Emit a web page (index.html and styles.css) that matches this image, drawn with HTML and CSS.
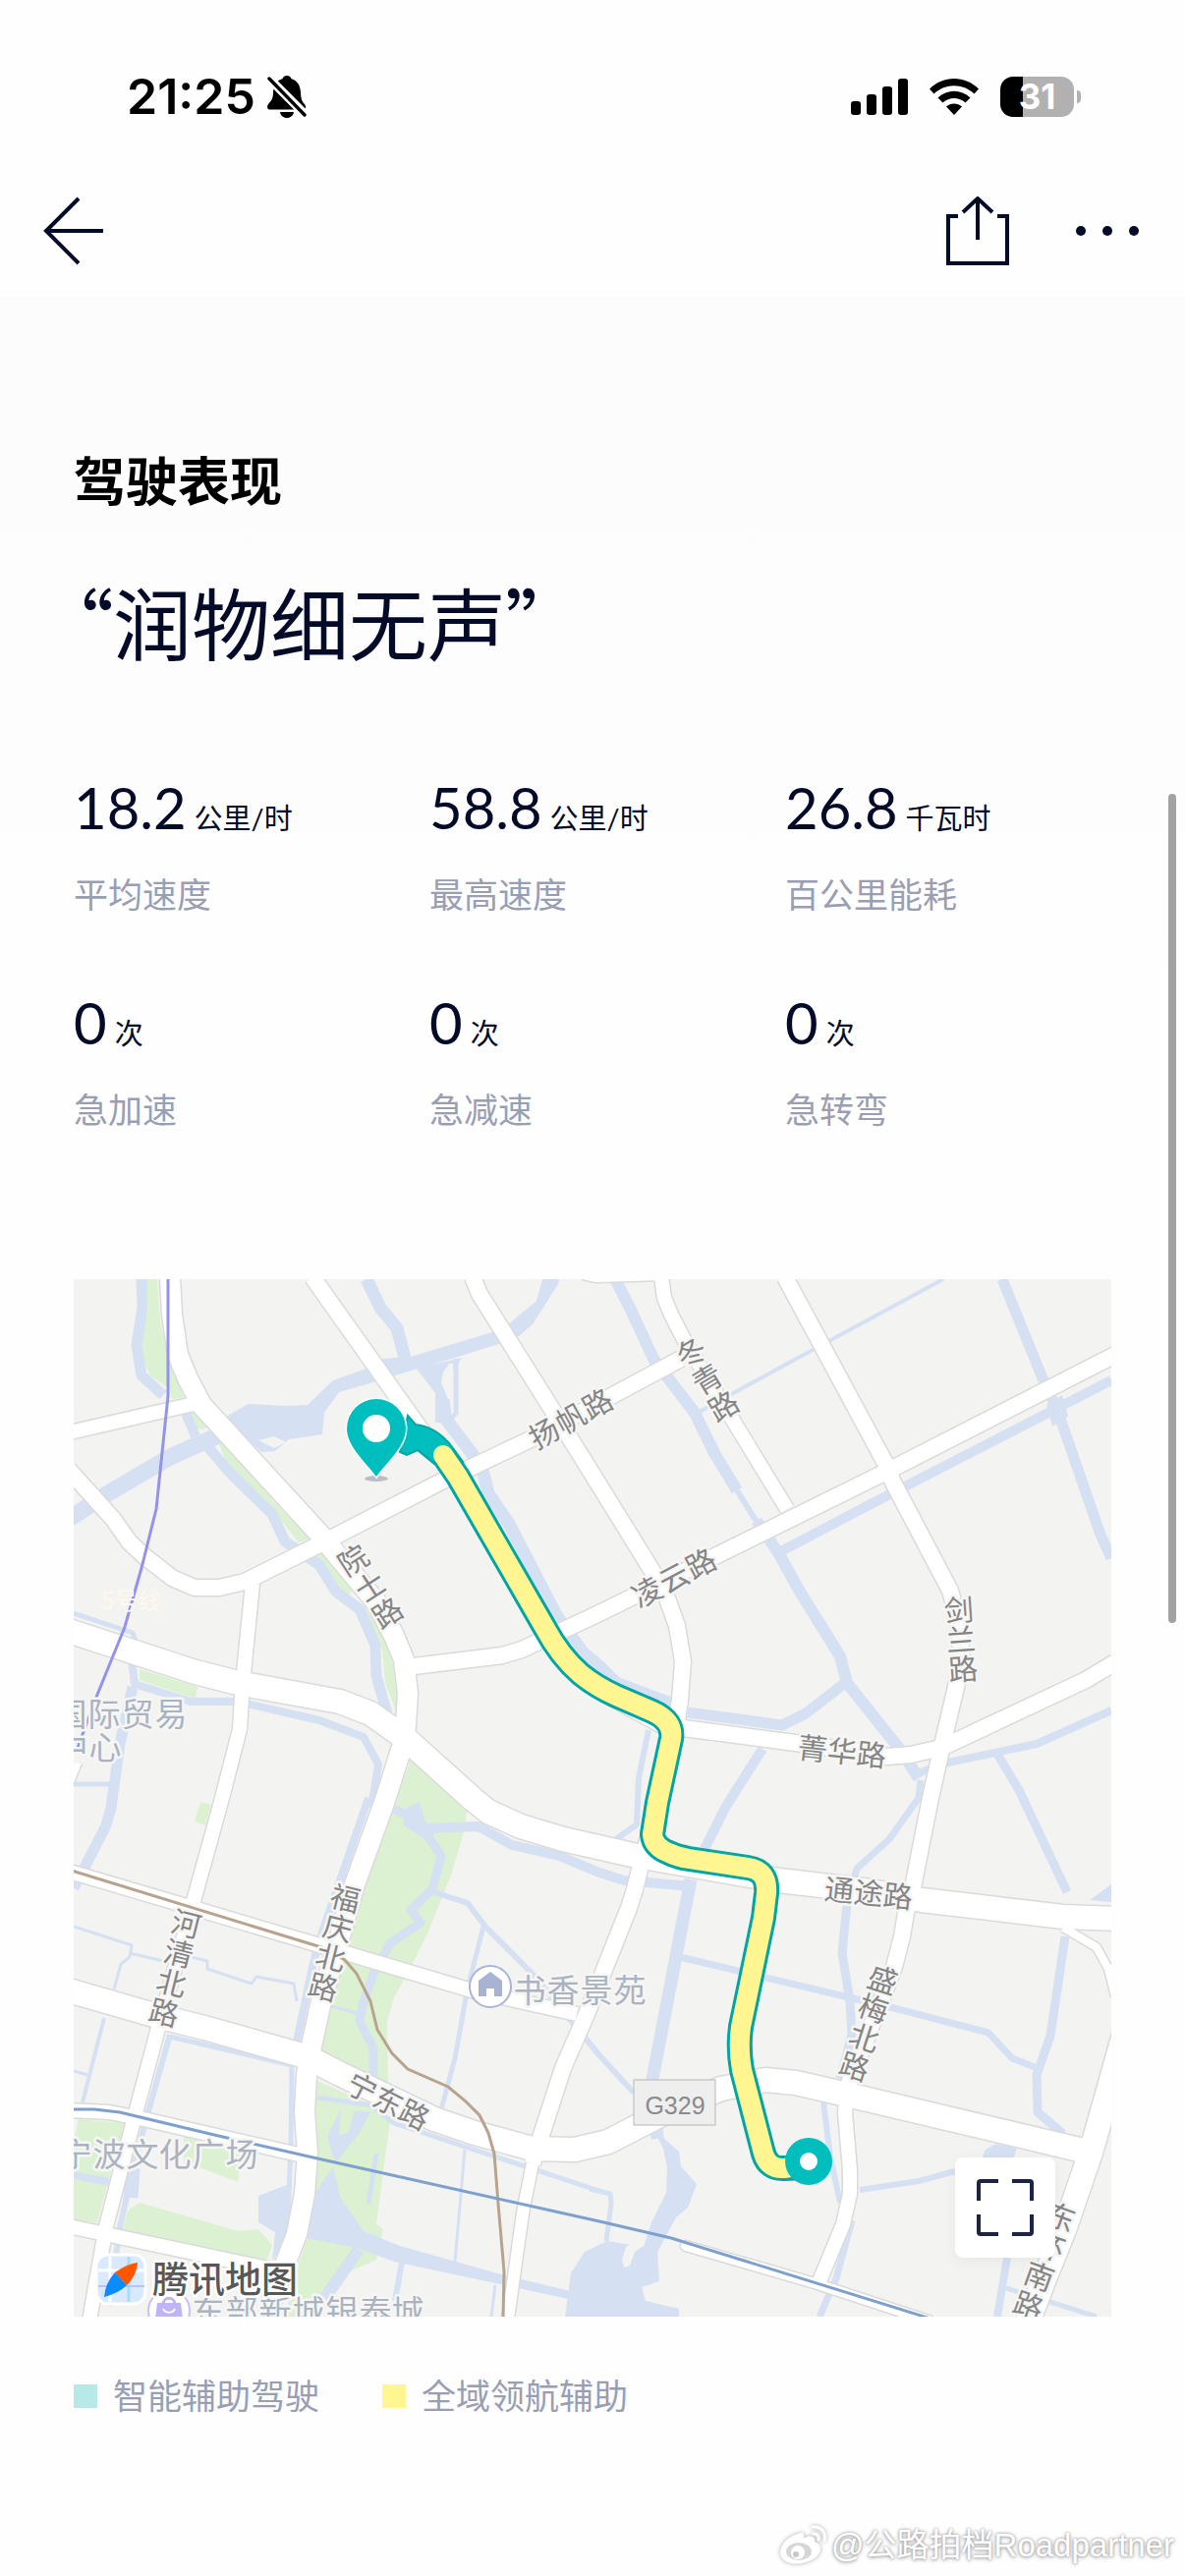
FILE: index.html
```html
<!DOCTYPE html>
<html lang="zh-CN">
<head>
  <meta charset="UTF-8">
  <title>驾驶表现</title>
  <meta name="viewport" content="width=device-width, initial-scale=1.0">
  <link rel="stylesheet" href="styles.css">
</head>
<body>
  <div class="status">
    <div class="status-left">
      <span class="time">21:25</span>
      <svg class="bell" viewBox="0 0 40 43" width="40" height="43">
        <path d="M20 0c2.500 0 4 1.500 4.600 3.200C30.500 5 33.500 9.500 34 17c.3 6 1 8.500 3.500 11.500 2.500 2.500 1.800 6-1 6H3c-3.500 0-3.700-3.500-1.500-6C5 24.500 6 22 6 17c.4-7.500 3.500-12 9.400-13.800C16 1.500 17.500 0 20 0zM13 37h14c-.5 3.500-3.300 6-7 6s-6.500-2.500-7-6z"/>
        <path d="M0 1l40 40" stroke="#fff" stroke-width="9"/>
        <path d="M2 3l36 37" stroke="#000" stroke-width="3.400" stroke-linecap="round"/>
      </svg>
    </div>
    <div class="status-right">
      <svg viewBox="0 0 58 37" width="58" height="37">
        <rect y="23" width="10" height="14" rx="3"/>
        <rect x="16" y="16" width="10" height="21" rx="3"/>
        <rect x="32" y="8" width="10" height="29" rx="3"/>
        <rect x="48" width="10" height="37" rx="3"/>
      </svg>
      <svg viewBox="0 0 50 37" width="50" height="37">
        <path d="M0 10.500C14-3.500 36-3.500 50 10.500l-4.500 5C34 4.500 16 4.500 4.500 15.500z"/>
        <path d="M8.500 19.500c9.500-9 23.500-9 33 0l-5 5c-6.500-6-16.500-6-23 0z"/>
        <path d="M17 28.500c4.500-4 11.500-4 16 0L25 37z"/>
      </svg>
      <div class="battery"><span>31</span></div>
    </div>
  </div>

  <nav class="nav">
    <button class="icon-btn" aria-label="返回">
      <svg viewBox="0 0 62 70" width="62" height="70" class="line">
        <path d="M36 2L3 35l33 33M3 35h58"/>
      </svg>
    </button>
    <div class="nav-right">
      <button class="icon-btn" aria-label="分享">
        <svg viewBox="0 0 64 70" width="64" height="70" class="line">
          <path d="M12 20H2v48h60V20H52M32 44V2M17 16L32 2l15 14"/>
        </svg>
      </button>
      <button class="icon-btn" aria-label="更多">
        <svg viewBox="0 0 64 70" width="64" height="70" class="dots">
          <circle cx="5" cy="35" r="5"/><circle cx="32" cy="35" r="5"/><circle cx="59" cy="35" r="5"/>
        </svg>
      </button>
    </div>
  </nav>

  <main class="report">
    <h1>驾驶表现</h1>
    <p class="slogan">“润物细无声”</p>

    <div class="stats">
      <div class="stat"><div class="value">18.2<span>公里/时</span></div><div class="name">平均速度</div></div>
      <div class="stat"><div class="value">58.8<span>公里/时</span></div><div class="name">最高速度</div></div>
      <div class="stat"><div class="value">26.8<span>千瓦时</span></div><div class="name">百公里能耗</div></div>
      <div class="stat"><div class="value">0<span>次</span></div><div class="name">急加速</div></div>
      <div class="stat"><div class="value">0<span>次</span></div><div class="name">急减速</div></div>
      <div class="stat"><div class="value">0<span>次</span></div><div class="name">急转弯</div></div>
    </div>

    <div class="map">
      <svg viewBox="0 0 1056 1056">
        <!-- parks -->
        <g class="park">
          <path d="M70 0H85L88 43 97 84 112 120 100 122 98 112 78 98 68 77 72 46 76 29z"/>
          <path d="M112 136L122 135 138 150 131 153 119 150z"/>
          <path d="M147 165L181 184 202 225 240 264 229 268 209 243 188 222 157 191z"/>
          <path d="M253 277L286 315 277 323 267 322 265 308 241 282z"/>
          <path d="M296 332L317 367 327 398 329 442 317 411 314 377 295 342z"/>
          <path d="M67 397L126 415 124 427 67 408z"/>
          <path d="M129 532L140 535 134 556 123 552z"/>
          <path d="M343 489L396 538 400 542 398 559 384 607 360 666 343 700 326 731 319 755 320 821 298 810 252 786 262 741 277 680 296 619 326 538z"/>
          <path d="M248 816L298 838 322 859 315 907 308 962 315 967 308 998 281 1010 264 1027 248 1056H215L222 1030 229 1002 238 976 246 931 249 890 246 838z"/>
          <path d="M5 855L52 859 33 926 24 960 0 957V876z"/>
          <path d="M112 872L171 890 167 919 112 898z"/>
          <path d="M67 940L126 957 167 969 188 967 202 983 196 1000 50 967 55 948z"/>
        </g>

        <!-- rivers and lakes -->
        <g class="lake">
          <path d="M157 139L177 127 215 129 238 128 264 103 298 91 315 81 343 79 436 51 471 22 477 0H494L493 5 467 46 453 58 436 65 391 79 350 91 305 105 270 115 255 136 253 158 219 163 205 175 191 176 174 160 147 165z"/>
          <path d="M348 90L378 84 395 80 381 100 385 146H368V116z"/>
          <path d="M188 933L222 920 220 970 202 1000 205 970 188 960z"/>
          <path d="M264 903L243 934 236 976 288 986 326 1000 439 1024 535 1045V1037L439 1014 332 984 295 969 271 934z"/>
          <path d="M272 845L258 872 266 900 290 870 302 848 286 846 280 868 270 872z"/>
          <path d="M590 865L616 888 618 903 634 921 625 945 613 955 594 990 596 1020 578 1026 582 1040 616 1048V1056H500L506 1012 520 990 543 979 580 985 588 960 603 930 604 905 600 885z"/>
          <path d="M335 540L352 532 358 552 372 560 360 572 348 564 336 556z"/>
          <path d="M990 128L1006 118 1012 140 996 150z"/>
          <path d="M928 886L938 880 960 884 955 900H922z"/>
          <path d="M1034 632L1056 616V634z"/>
        </g>
        <g class="islet">
          <path d="M376 95L382 86H386V122H381L374 105z"/>
          <path d="M188 164L204 160 216 166 204 172z"/>
          <path d="M562 985L572 978 580 984 571 990 566 1004 560 1006 558 998z"/>
        </g>
        <g class="river">
          <path stroke-width="11" d="M69-2L70 29 64 67 69 98 91 118"/>
          <path stroke-width="17" d="M-5 244L35 218 98 181 150 158"/>
          <path stroke-width="10" d="M114 136L124 160"/>
          <path stroke-width="13" d="M298 0L312 29 329 50 338 84"/>
          <path stroke-width="13" d="M377 140L405 177 417 198 422 218 443 249 491 342 518 380 535 394 552 411 608 432"/>
          <path stroke-width="5" d="M389 81V136L384 142"/>
          <path stroke-width="11" d="M136 170L160 198 202 239 215 267 250 291 267 318 291 336 307 373 308 404 319 442"/>
          <path stroke-width="5" d="M0 340L60 360 64 370"/>
          <path stroke-width="8" d="M59 387L62 412 119 430 167 430 250 449 295 466 310 494 303 538"/>
          <path stroke-width="11" d="M60 415L47 473 38 538 33 556 12 597 0 620"/>
          <path stroke-width="5" d="M0 514H36"/>
          <path stroke-width="9" d="M326 540L350 549 360 566 374 587 365 621 343 642 353 655 322 676 305 707 295 735 291 755 305 783V814"/>
          <path stroke-width="10" d="M360 559L412 557 446 576 494 587 535 604 560 612 628 618"/>
          <path stroke-width="6" d="M367 624L401 635 419 659 467 707 535 790 570 828"/>
          <path stroke-width="5" d="M417 659L401 721 388 793 374 845"/>
          <path stroke-width="8" d="M300 528L250 673 243 700 227 776"/>
          <path stroke-width="3" d="M0 659L59 678 57 690 48 697 41 723M57 686L100 696M120 690L136 694V702L181 717 186 710 224 717 227 735M262 740L291 748M0 806L14 810"/>
          <path stroke-width="4" d="M31 752L9 838"/>
          <path stroke-width="6" d="M98 769L76 847 60 907 47 965 36 1045"/>
          <path stroke-width="5" d="M98 771L222 800 221 883 219 927"/>
          <path stroke-width="15" d="M60 905L58 935"/>
          <path stroke-width="8" d="M0 912L36 919"/>
          <path stroke-width="5" d="M248 833L302 841 326 859 398 883 456 902 535 928"/>
          <path stroke-width="12" d="M290 988L250 1045"/>
          <path stroke-width="5" d="M308 890L300 941"/>
          <path stroke-width="3" d="M398 886L388 1000M429 1024L425 1056"/>
          <path stroke-width="6" d="M334 1000L327 1040"/>
          <path stroke-width="5" d="M525 926L546 931 547 941 542 979"/>
          <path stroke-width="12" d="M551 0L566 29 590 81 632 136 652 177 675 215M695 246L718 280 739 318 780 384 787 411 842 480 860 508"/>
          <path stroke-width="6" d="M675 215L697 250"/>
          <path stroke-width="4" d="M635 136L673 115 752 72 885 0"/>
          <path stroke-width="10" d="M718 278L811 229 986 139 1056 103"/>
          <path stroke-width="11" d="M945 0L986 101 1002 136 1045 260 1056 284"/>
          <path stroke-width="11" d="M625 441L721 454 745 442 785 411"/>
          <path stroke-width="10" d="M701 478L663 538 642 580"/>
          <path stroke-width="13" d="M628 611L589 814 594 875"/>
          <path stroke-width="7" d="M617 690L776 728 835 742 931 767 955 793 983 804"/>
          <path stroke-width="9" d="M787 635L782 686 790 735 792 769 780 814"/>
          <path stroke-width="7" d="M862 510L860 528 830 570 797 600 787 635"/>
          <path stroke-width="8" d="M856 504L890 492 980 473 1056 439"/>
          <path stroke-width="9" d="M938 480L962 520 1011 624"/>
          <path stroke-width="6" d="M585 459L575 508 573 555 552 570"/>
          <path stroke-width="9" d="M1009 669L994 770 980 810 981 848 1007 870"/>
          <path stroke-width="6" d="M763 838L770 893 780 940M800 927L860 918 897 908"/>
          <path stroke-width="7" d="M792 958L776 1017 759 1056"/>
          <path stroke-width="8" d="M950 996L940 1056"/>
          <path stroke-width="5" d="M949 1027L1041 1056"/>
        </g>

        <!-- roads: drawn twice, grey edge first and white on top -->
        <defs>
          <g id="roads">
            <path class="w20" d="M98-2L100 36 106 77 116 101 130 128 250 259 308 329 326 363 336 387 340 422 338 453 336 470 316 533 286 616 252 735 241 785 237 810 235 848 238 890 235 931 227 972 215 1003 202 1038 198 1060"/>
            <path class="w16" d="M243-2L353 153 391 201 479 354 508 394 549 427 608 459"/>
            <path class="w16" d="M406-2L413 15 489 136 535 210 590 299 604 325 614 353 620 389 617 428 613 456 594 538 580 585 571 621 565 640 522 748 498 803 475 874 467 900"/>
            <path class="w12" d="M467 900L458 945 456 958 442 1058"/>
            <path class="w14" d="M-4 156L122 127"/>
            <path class="w16" d="M-5 194L40 244 57 268 72 282 100 304 123 314 148 314 174 308 250 270 374 206 467 162 618 81"/>
            <path class="w14" d="M182 310L173 401 171 425 169 458 150 532 122 633 85 766 64 845 33 964 16 1060"/>
            <path class="w24" d="M-5 358L124 400 167 411 271 430 302 442 336 466 407 530 422 542 455 557 498 570 573 587 718 612 811 623 863 632 1007 649 1060 651"/>
            <path class="w8" d="M1007 660L1041 680 1053 702 1060 730"/>
            <path class="w14" d="M-4 603L250 678 405 724 512 748"/>
            <path class="w24" d="M-5 724L85 750 133 762 236 791 271 809 367 855 408 869 467 885 510 886 544 878 604 847 659 824 704 815 735 818 787 830 1036 889"/>
            <path class="w14" d="M-4 846L36 848 67 854 233 892M-5 964L202 1008"/>
            <path class="w14" d="M598-2L601 19 608 36 623 65 726 234"/>
            <path class="w8" d="M518-4L532-1 600-3"/>
            <path class="w16" d="M724-2L828 191 833 205 892 317 900 346 904 387 899 411 885 470 872 528 854 619 847 645 843 669 835 700 787 824"/>
            <path class="w14" d="M787 824L785 848 790 907V931L783 962 759 1020"/>
            <path class="w16" d="M346 394L436 383 456 377 535 340 825 197 1060 77"/>
            <path class="w16" d="M613 456L742 473 828 486 852 484 883 477 1030 408 1060 390"/>
            <path class="w24" d="M1069 769L1036 886 1009 965 985 1025 972 1060"/>
            <path class="w10" d="M623 984L754 1022 870 1060"/>
            <path class="w8" d="M-4 512L4 492"/>
          </g>
        </defs>
        <use href="#roads" class="road-edge"/>
        <use href="#roads" class="road-fill"/>

        <!-- rail lines -->
        <path class="rail" stroke="#9393ee" d="M96-2V119L84 234 69 294 52 354 24 423 4 477"/>
        <path class="rail" stroke="#b8a48e" d="M-2 602L252 680 276 693 288 707 302 735 309 764 324 788 340 804 381 822 398 836 413 851 422 869 428 890 432 941 438 1010 437 1060"/>
        <path class="rail" stroke="#7ea0cc" d="M-2 845H21L47 848 143 871 248 895 535 959 608 976 872 1058"/>

        <!-- route -->
        <path class="start" d="M340 139L348 148Q367 150 382 167L396 186 367 188 350 174 339 179 332 176z"/>
        <path class="route-edge" d="M376 179L391 201 479 354Q495 384 516 402 532 415 552 424L589 440Q611 450 608 468L594 533 589 565Q590 578 606 584 614 588 626 590L686 599Q707 602 705 625L702 650 679 761Q676 783 680 805L702 890Q707 906 723 905L745 904"/>
        <path class="route" d="M376 179L391 201 479 354Q495 384 516 402 532 415 552 424L589 440Q611 450 608 468L594 533 589 565Q590 578 606 584 614 588 626 590L686 599Q707 602 705 625L702 650 679 761Q676 783 680 805L702 890Q707 906 723 905L730 904"/>
        <circle cx="748" cy="898" r="24" fill="#00bebe"/>
        <circle cx="748" cy="898" r="9" fill="#fff"/>
        <ellipse cx="308" cy="203" rx="12" ry="3" fill="#bdbcc4"/>
        <path class="pin" d="M308 201C296 185 278 170 278 152a30 30 0 0 1 60 0C338 170 320 185 308 201z"/>
        <circle cx="308" cy="152" r="14" fill="#fff"/>

        <!-- road names -->
        <g class="road-name">
          <text transform="translate(506 142) rotate(-29)" x="-31 0 31" y="11">扬帆路</text>
          <text transform="translate(611 304) rotate(-28)" x="-31 0 31" y="11">凌云路</text>
          <text transform="translate(782 481) rotate(6)" x="-30 0 30" y="11">菁华路</text>
          <text transform="translate(809 625) rotate(6)" x="-30 0 30" y="11">通途路</text>
          <text transform="translate(320 837) rotate(27)" x="-30 0 30" y="11">宁东路</text>
          <text transform="translate(645 102) rotate(-31)" x="0 0 0" y="-21 11 43">冬青路</text>
          <text transform="translate(302 313) rotate(-33)" x="0 0 0" y="-21 11 43">院士路</text>
          <text transform="translate(903 367) rotate(-4)" x="0 0 0" y="-19 11 41">剑兰路</text>
          <text transform="translate(809 758) rotate(18)" x="0 0 0 0" y="-36 -5 26 57">盛梅北路</text>
          <text transform="translate(265 676) rotate(14)" x="0 0 0 0" y="-36 -5 26 57">福庆北路</text>
          <text transform="translate(103 702) rotate(14)" x="0 0 0 0" y="-36 -5 26 57">河清北路</text>
          <text transform="translate(988 1000) rotate(20)" x="0 0 0 0" y="-37 -5 27 59">东环南路</text>
        </g>
        <rect x="570" y="815" width="83" height="46" fill="#eee" stroke="#b8b8b8"/>
        <text class="road-no" x="612" y="850">G329</text>

        <!-- places -->
        <g class="place">
          <text x="-3 31 65 99" y="455">国际贸易</text>
          <text x="-2 32" y="489">中心</text>
          <text x="464 498 532 566" y="736">书香景苑</text>
          <text x="2 36 70 103 137 171" y="903">宁波文化广场</text>
          <text x="137 171 205 239 273 307 340" y="1063">东部新城银泰城</text>
        </g>
        <text class="metro" x="28" y="336">5号线</text>
        <circle cx="424" cy="720" r="21" fill="#fff" stroke="#aab5d6" stroke-width="2"/>
        <path fill="#a8b3d2" d="M412 714l12-9 12 9v16h-8v-8h-8v8h-8z"/>
        <circle cx="97" cy="1050" r="21" fill="#fff" stroke="#c9c0f0" stroke-width="2"/>
        <path fill="#c0b4f5" d="M85 1042h24l2 16H83z"/>
        <path fill="none" stroke="#c0b4f5" stroke-width="3" d="M91 1044c0-9 12-9 12 0"/>
        <path fill="none" stroke="#fff" stroke-width="2" d="M91 1048c2 5 10 5 12 0"/>

        <!-- map brand -->
        <rect x="23" y="993" width="50" height="50" rx="12" fill="#d9e9ff" stroke="#fff" stroke-width="3"/>
        <path stroke="#fff" stroke-width="3" d="M25 1009h47M37 995v46"/>
        <path stroke="#a8dcff" stroke-width="3" d="M56 995v46"/>
        <path stroke="#b8c4ff" stroke-width="2" d="M25 1025h47"/>
        <path fill="#ff6a00" d="M65 1001Q54 1002 42 1011L54 1024Q64 1014 65 1001z"/>
        <path fill="#ff3d00" d="M65 1001L42 1011 54 1024Q64 1014 65 1001z" opacity=".5"/>
        <path fill="#0a8bff" d="M31 1036Q32 1022 42 1011L54 1024Q46 1032 31 1036z"/>
        <text class="brand" x="80" y="1032">腾讯地图</text>
      </svg>
      <button class="expand" aria-label="全屏">
        <svg viewBox="0 0 58 58" width="58" height="58">
          <path d="M2 22V4q0-2 2-2h18M36 2h18q2 0 2 2v18M56 36v18q0 2-2 2H36M22 56H4q-2 0-2-2V36"/>
        </svg>
      </button>
    </div>

    <ul class="legend">
      <li><i class="swatch assist"></i>智能辅助驾驶</li>
      <li><i class="swatch pilot"></i>全域领航辅助</li>
    </ul>
  </main>

  <footer class="credit">
    <svg viewBox="0 0 48 42" width="48" height="42">
      <path fill="#fff" d="M18 9c4-2 7-1 6 4 6-2 12-2 11 4 11 4 6 16-6 20C14 43 0 38 0 28 0 20 9 11 18 9z"/>
      <ellipse cx="19" cy="27" rx="13" ry="9" fill="#d6d6d6"/>
      <circle cx="18" cy="28" r="7" fill="#fff"/>
      <circle cx="16" cy="30" r="3" fill="#c8c8c8"/>
      <path fill="none" stroke="#fff" stroke-width="3" stroke-linecap="round" d="M33 2c9-1 14 6 12 14M34 9c4 0 6 3 5 6"/>
    </svg>
    <span>@公路拍档Roadpartner</span>
  </footer>

  <div class="scrollbar"></div>
</body>
</html>
```
FILE: styles.css
```css
:root {
  --ink: #040b29;
  --muted: #9a9eb2;
  --teal: #00bebe;
  --yellow: #fff692;
}

* {
  box-sizing: border-box;
}
body {
  margin: 0;
  position: relative;
  background: #fefefe;
  color: var(--ink);
  font-family: "Noto Sans", "Noto Sans CJK SC", sans-serif;
}
h1, p, ul {
  margin: 0;
  padding: 0;
}
svg {
  display: block;
}

/* status bar */
.status {
  display: flex;
  justify-content: space-between;
  padding: 77px 106px 0 129px;
}
.status-left, .status-right {
  display: flex;
  align-items: center;
  height: 43px;
}
.status-left {
  gap: 12px;
}
.status-right {
  gap: 22px;
}
.time {
  color: #000;
  font: 600 50px/43px Inter, sans-serif;
}
.battery {
  position: relative;
  width: 75px;
  height: 41px;
  margin-right: 7px;
  border-radius: 13px;
  background: linear-gradient(90deg, #000 23px, #b1b1b1 23px);
  color: #fff;
  font: 700 35px/41px Inter, sans-serif;
  text-align: center;
}
.battery::after {
  content: "";
  position: absolute;
  right: -7px;
  top: 14px;
  width: 4px;
  height: 13px;
  border-radius: 0 4px 4px 0;
  background: #b1b1b1;
}

/* navigation */
.nav {
  display: flex;
  justify-content: space-between;
  padding: 80px 47px 32px 44px;
}
.nav-right {
  display: flex;
  gap: 68px;
}
.icon-btn {
  padding: 0;
  border: none;
  background: none;
  cursor: pointer;
}
.line {
  fill: none;
  stroke: var(--ink);
  stroke-width: 4;
}
.dots {
  fill: var(--ink);
}

/* report */
.report {
  padding: 158px 75px 0;
  background: linear-gradient(#fcfcfc, #fefefe 700px);
}
h1 {
  color: #000;
  font-size: 53px;
  font-weight: 700;
  line-height: 60px;
}
.slogan {
  margin-top: 61px;
  font-family: "Noto Sans CJK SC", sans-serif;
  font-feature-settings: "palt";
  font-size: 80px;
  line-height: 100px;
}
.stats {
  display: grid;
  grid-template-columns: repeat(3, 1fr);
  column-gap: 30px;
  row-gap: 75px;
  margin: 111px 0 147px;
}
.value {
  display: flex;
  align-items: baseline;
  gap: 8px;
  font-family: Lato, "Noto Sans CJK SC", sans-serif;
  font-size: 58px;
  line-height: 60px;
}
.value span {
  font-size: 29px;
  line-height: 30px;
}
.name {
  margin-top: 34px;
  color: var(--muted);
  font-size: 35px;
  line-height: 50px;
}

/* map */
.map {
  position: relative;
  overflow: hidden;
  background: #f3f3f1;
}
.map > svg {
  width: 100%;
}
.map text {
  font-family: "Noto Sans CJK SC", sans-serif;
  text-anchor: middle;
  paint-order: stroke;
  stroke: #f6f6f5;
  stroke-width: 5px;
  stroke-linejoin: round;
}
.park {
  fill: #dcf1d1;
}
.lake {
  fill: #d5e1f2;
}
.islet {
  fill: #f3f3f1;
}
.river {
  fill: none;
  stroke: #d5e1f2;
  stroke-linejoin: round;
}
#roads {
  fill: none;
  stroke-linejoin: round;
}
.road-edge {
  --edge: 3px;
  stroke: #dadada;
}
.road-fill {
  --edge: 0px;
  stroke: #fff;
}
.w8 { stroke-width: calc(8px + var(--edge)); }
.w10 { stroke-width: calc(10px + var(--edge)); stroke-linecap: round; }
.w12 { stroke-width: calc(12px + var(--edge)); }
.w14 { stroke-width: calc(14px + var(--edge)); }
.w16 { stroke-width: calc(16px + var(--edge)); }
.w20 { stroke-width: calc(20px + var(--edge)); }
.w24 { stroke-width: calc(24px + var(--edge)); }
.rail {
  fill: none;
  stroke-width: 3;
}
.route, .route-edge {
  fill: none;
  stroke: #00a5a5;
  stroke-width: 26;
  stroke-linejoin: round;
}
.route {
  stroke: var(--yellow);
  stroke-width: 20;
  stroke-linecap: round;
}
.start {
  fill: var(--teal);
  stroke: #00a5a5;
  stroke-width: 2;
}
.pin {
  fill: var(--teal);
  stroke: #fff;
  stroke-width: 3;
  paint-order: stroke;
}
.road-name {
  fill: #858585;
  font-size: 30px;
}
.place {
  fill: #abb3c0;
  font-size: 33px;
}
.map .road-no {
  fill: #8c898b;
  stroke: none;
  font: 25px "Liberation Sans", sans-serif;
}
.map .metro {
  fill: #fff8ec;
  stroke: none;
  font-size: 24px;
  text-anchor: start;
}
.map .brand {
  fill: #585858;
  stroke: #fff;
  font-size: 37px;
  font-weight: 500;
  text-anchor: start;
}
.expand {
  position: absolute;
  right: 57px;
  bottom: 60px;
  display: grid;
  place-items: center;
  width: 102px;
  height: 102px;
  padding: 0;
  border: none;
  border-radius: 8px;
  background: #fff;
  box-shadow: 0 4px 16px rgba(0, 0, 0, 0.05);
  cursor: pointer;
}
.expand path {
  fill: none;
  stroke: #1d2342;
  stroke-width: 4;
}

/* legend */
.legend {
  display: flex;
  gap: 64px;
  margin-top: 56px;
  list-style: none;
  color: var(--muted);
  font-size: 35px;
  line-height: 50px;
}
.legend li {
  display: flex;
  align-items: center;
  gap: 16px;
}
.swatch {
  width: 24px;
  height: 24px;
}
.assist {
  background: #b8e9e9;
}
.pilot {
  background: var(--yellow);
}

.credit {
  display: flex;
  justify-content: flex-end;
  align-items: center;
  gap: 4px;
  margin-top: 106px;
  padding: 0 11px 8px 0;
  color: #fff;
  font: 33px/42px "Liberation Sans", "Noto Sans CJK SC", sans-serif;
  text-shadow: 0 0 3px #999, 0 1px 4px #aaa;
}
.credit svg {
  overflow: visible;
  filter: drop-shadow(0 0 2px #aaa);
}
.scrollbar {
  position: absolute;
  top: 808px;
  right: 9px;
  width: 8px;
  height: 844px;
  border-radius: 4px;
  background: #a2a2a2;
}
```
